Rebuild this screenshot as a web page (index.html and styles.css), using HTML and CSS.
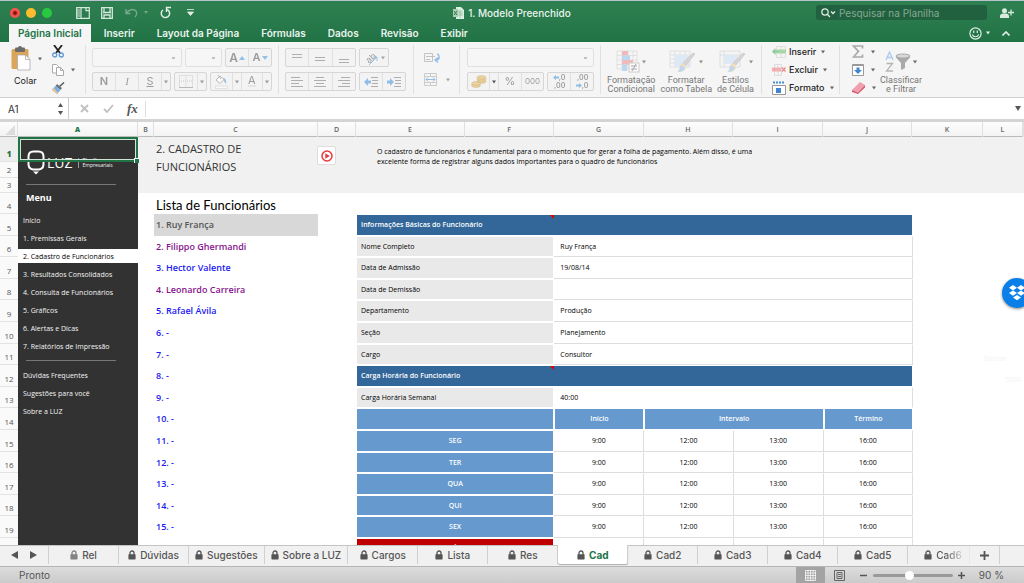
FILE: index.html
```html
<!DOCTYPE html>
<html lang="pt-BR">
<head>
<meta charset="utf-8">
<title>1. Modelo Preenchido</title>
<link rel="stylesheet" href="styles.css">
</head>
<body>
<svg class="defs" aria-hidden="true">
  <symbol id="caret" viewBox="0 0 5 4"><path d="M0 0h5L2.5 4z" fill="currentColor"/></symbol>
  <symbol id="lock" viewBox="0 0 8 10"><path d="M2 5V3a2 2 0 0 1 4 0v2" fill="none" stroke="currentColor" stroke-width="1.3"/><rect x="0.4" y="4.2" width="7.2" height="5.2" rx=".6" fill="currentColor"/></symbol>
  <symbol id="brush" viewBox="0 0 28 24"><path d="M26 4 17 15l-3-2L24 3z" fill="#c9c9c9" stroke="#aaa" stroke-width=".6"/><path d="M14 13l3 3c0 5-4 6-9 6 3-2 2-4 3-6 1-2 2-3 3-3z" fill="#f3d3a0"/><path d="M12 15l4 3c-1 3-4 4-7 4 2-2 1-5 3-7z" fill="#a9cdec"/></symbol>
</svg>
<div class="window">
  <header class="top">
    <div class="titlebar">
      <div class="quick">
        <span class="light red"></span><span class="light yellow"></span><span class="light green"></span>
        <button class="q-book" aria-label="Novo"><svg width="14" height="12" viewBox="0 0 14 12"><path d="M.7.7h12.6v10.6H.7zM5 .7v10.6M10 .7v3h3" fill="none" stroke="#d5e8dc" stroke-width="1.2"/><path d="M1 3h3M1 5h3M1 7h3M1 9h3" stroke="#d5e8dc"/></svg></button>
        <button class="q-save" aria-label="Salvar"><svg width="12" height="12" viewBox="0 0 12 12"><path d="M.7.7h10.6v10.6H.7z" fill="none" stroke="#d5e8dc" stroke-width="1.3"/><path d="M2 5.5h8M3 11V8h6v3M3 1v4M9 1v4" fill="none" stroke="#d5e8dc" stroke-width="1.3"/></svg></button>
        <button class="q-undo" aria-label="Desfazer"><svg width="13" height="10" viewBox="0 0 13 10"><path d="M1 1v4.500h4.500M1.500 5C4 2 7 1 9.500 2s3 4 .5 7" fill="none" stroke="#74a98a" stroke-width="1.400"/></svg></button>
        <svg class="q-uc" width="4" height="3"><use href="#caret"/></svg>
        <button class="q-redo" aria-label="Refazer"><svg width="11" height="13" viewBox="0 0 11 13"><path d="M7 3.500A4.200 4.200 0 1 1 3 4" fill="none" stroke="#e2efe7" stroke-width="1.500"/><path d="M6.500 6V1.500H11" fill="none" stroke="#e2efe7" stroke-width="1.400"/></svg></button>
        <button class="q-more" aria-label="Personalizar"><svg width="7" height="7" viewBox="0 0 7 7"><path d="M0 .5h7M.5 3h6L3.500 6.500z" fill="#e2efe7" stroke="#e2efe7" stroke-width=".8"/></svg></button>
      </div>
      <div class="doc"><svg width="11" height="12" viewBox="0 0 11 12"><path d="M3 0h5l3 3v9H3z" fill="#dcefe0"/><path d="M5 4h4M5 6h5M5 8h5M7 4v7" stroke="#83b893" stroke-width=".7"/><rect y="2" width="5" height="8" fill="#a9cdb3"/><path d="M1 4l3 4M4 4L1 8" stroke="#2b7b4c"/></svg>1. Modelo Preenchido</div>
      <div class="right">
        <label class="search"><svg width="15" height="10" viewBox="0 0 15 10"><circle cx="4" cy="4" r="3.200" fill="none" stroke="#e0eee5" stroke-width="1.200"/><path d="M6.300 6.300 9 9M10 3.500l2 2 2-2" fill="none" stroke="#e0eee5" stroke-width="1.300"/></svg><input type="text" placeholder="Pesquisar na Planilha" aria-label="Pesquisar na Planilha"></label>
        <button aria-label="Compartilhar"><svg width="14" height="10" viewBox="0 0 14 10"><circle cx="4.500" cy="2.700" r="2.500" fill="#d9eadf"/><path d="M0 10V8c0-2 2-2.500 4.500-2.500S9 6 9 8v2z" fill="#d9eadf"/><path d="M11 1.500v6M8 4.500h6" stroke="#d9eadf" stroke-width="1.300"/></svg></button>
      </div>
    </div>
    <nav class="tabs">
      <button class="tab on">Página Inicial</button><button class="tab">Inserir</button><button class="tab">Layout da Página</button><button class="tab">Fórmulas</button><button class="tab">Dados</button><button class="tab">Revisão</button><button class="tab">Exibir</button>
      <div class="feedback"><svg width="13" height="13" viewBox="0 0 13 13"><circle cx="6.500" cy="6.500" r="5.600" fill="none" stroke="#e0eee5" stroke-width="1.200"/><path d="M4.700 3.500v2.500M8.300 3.500v2.500M3.300 7.500c1 3 5.400 3 6.400 0" fill="none" stroke="#e0eee5" stroke-width="1.200"/></svg><svg width="4" height="4"><use href="#caret"/></svg><svg class="up" width="8" height="5" viewBox="0 0 8 5"><path d="M.5 4.500 4 1l3.500 3.500" fill="none" stroke="#e0eee5" stroke-width="1.600"/></svg></div>
    </nav>
  </header>

  <section class="ribbon">
    <div class="group g-clip">
      <button class="paste"><span class="ic"><svg width="20" height="25" viewBox="0 0 20 25"><rect x=".5" y="3" width="17" height="20" rx="1.500" fill="#dba65a"/><rect x="4" y="1.500" width="10" height="4.500" rx="1" fill="#6b6b6b"/><circle cx="9" cy="2" r="2" fill="#6b6b6b"/><path d="M6.500 9h8l4.500 4.500V24H6.500z" fill="#fff" stroke="#aaa" stroke-width=".8"/><path d="M14.500 9v4.500H19" fill="none" stroke="#aaa" stroke-width=".8"/></svg><svg width="4" height="4"><use href="#caret"/></svg></span><span>Colar</span></button>
      <div class="stack">
        <button aria-label="Recortar"><svg width="12" height="13" viewBox="0 0 12 13"><path d="M2 0l6 8M10 0L4 8" stroke="#222" stroke-width="1.800"/><circle cx="2.700" cy="10" r="2" fill="none" stroke="#5d98d6" stroke-width="1.300"/><circle cx="9.300" cy="10" r="2" fill="none" stroke="#5d98d6" stroke-width="1.300"/></svg></button>
        <button aria-label="Copiar"><svg width="12" height="12" viewBox="0 0 12 12"><path d="M.5.5h4l2 2V9h-6z" fill="#fff" stroke="#aaa"/><path d="M4.500 3.500h4l3 3v5h-7z" fill="#fff" stroke="#aaa"/><path d="M8.500 3.500v3h3" fill="none" stroke="#aaa"/></svg><svg width="4" height="4"><use href="#caret"/></svg></button>
        <button aria-label="Pincel"><svg width="13" height="12" viewBox="0 0 13 12"><path d="M12.500 1 8 5 7 4l4.500-4z" fill="#555"/><path d="M5 2l5 4-1.500 2-5-4z" fill="#6a7480"/><path d="M3.500 4 8.500 8 5 12 0 7.500z" fill="#79aee0"/><path d="M2 6l4 5-1 1-5-4z" fill="#e8c48e"/></svg></button>
      </div>
    </div>
    <div class="group g-font off">
      <div class="row">
        <select class="w-font" aria-label="Fonte"><option></option></select><select class="w-size" aria-label="Tamanho"><option></option></select>
        <div class="btns fs"><button aria-label="Aumentar"><b class="big">A</b><svg width="6" height="4" viewBox="0 0 6 4"><path d="M0 4h6L3 0z" fill="#4a97dc"/></svg></button><button aria-label="Diminuir"><b>A</b><svg width="6" height="4" viewBox="0 0 6 4"><path d="M0 0h6L3 4z" fill="#4a97dc"/></svg></button></div>
      </div>
      <div class="row">
        <div class="btns nis"><button><b>N</b></button><button><i>I</i></button><button><u>S</u></button><button class="mini" aria-label="Mais"><svg width="4" height="4"><use href="#caret"/></svg></button></div>
        <div class="btns bd"><button aria-label="Bordas"><svg width="14" height="13" viewBox="0 0 14 13"><path d="M.5.5h13v12H.5zM7 0v12M0 6h14" fill="none" stroke="#aaa" stroke-dasharray="1 1"/><path d="M0 12.500h14" stroke="#888"/></svg></button><button class="mini" aria-label="Mais"><svg width="4" height="4"><use href="#caret"/></svg></button></div>
        <div class="btns fc"><button aria-label="Preenchimento"><svg width="13" height="14" viewBox="0 0 13 14"><path d="M5 1 1 5l4 3.500 4-4z" fill="#fff" stroke="#888"/><path d="M3 0l3 4" stroke="#888"/><path d="M8 3c2.500 0 3.500 2 3 6C9.500 7 9 6 8 3z" fill="#4a97dc"/><path d="M.5 11h12v2.500H.5z" fill="#fff" stroke="#bbb" stroke-width=".6"/></svg></button><button class="mini" aria-label="Mais"><svg width="4" height="4"><use href="#caret"/></svg></button><button><span class="under">A</span></button><button class="mini" aria-label="Mais"><svg width="4" height="4"><use href="#caret"/></svg></button></div>
      </div>
    </div>
    <div class="group g-align off">
      <div class="row">
        <div class="btns three"><button aria-label="Superior"><svg width="10" height="10"><path d="M0 1.500h10M0 4.500h10" stroke="#777"/></svg></button><button aria-label="Meio"><svg width="10" height="10"><path d="M0 4.500h10M0 7.500h10" stroke="#777"/></svg></button><button aria-label="Inferior"><svg width="10" height="10"><path d="M0 6.500h10M0 9.500h10" stroke="#777"/></svg></button></div>
        <div class="btns one"><button aria-label="Orientação"><span class="turn"><span class="ab">ab</span><svg width="9" height="9" viewBox="0 0 9 9"><path d="M0 9 8 1M4 1h4v4" fill="none" stroke="#4a97dc"/></svg></span><svg width="4" height="4"><use href="#caret"/></svg></button></div>
      </div>
      <div class="row">
        <div class="btns three"><button aria-label="Esquerda"><svg width="12" height="10"><path d="M0 .5h9M0 3.500h12M0 6.500h8M0 9.500h12" stroke="#777"/></svg></button><button aria-label="Centro"><svg width="12" height="10"><path d="M2 .5h8M0 3.500h12M2 6.500h8M0 9.500h12" stroke="#777"/></svg></button><button aria-label="Direita"><svg width="12" height="10"><path d="M3 .5h9M0 3.500h12M4 6.500h8M0 9.500h12" stroke="#777"/></svg></button></div>
        <div class="btns two"><button aria-label="Diminuir recuo"><svg width="14" height="10"><path d="M7 .5h7M8 3.500h6M8 6.500h6M7 9.500h7" stroke="#777"/><path d="M0 5l4-4v2.500h3v3H4V9z" fill="#3f92dc"/></svg></button><button aria-label="Aumentar recuo"><svg width="14" height="10"><path d="M7 .5h7M8 3.500h6M8 6.500h6M7 9.500h7" stroke="#777"/><path d="M7 5 3 1v2.500H0v3h3V9z" fill="#3f92dc"/></svg></button></div>
      </div>
    </div>
    <div class="group g-wrap off">
      <button aria-label="Quebrar texto"><svg width="16" height="12" viewBox="0 0 16 12"><path d="M.5 1.500h8v8h-8zM2 4.500h9M2 7.500h4" fill="none" stroke="#999"/><path d="M13 2c3 1 3 6-1 6M14 5.500 11 8l3 2.500" fill="none" stroke="#3f92dc" stroke-width="1.400"/></svg></button>
      <button aria-label="Mesclar"><svg width="14" height="14" viewBox="0 0 14 14"><path d="M.5.5h12v12H.5zM.5 3.500h12M.5 9.500h12M6.500.5v3M6.500 9.500v3" fill="none" stroke="#aaa"/><path d="M2 6.500h9M4 4.500l-2 2 2 2M9 4.500l2 2-2 2" fill="none" stroke="#3f92dc"/></svg><svg width="4" height="4"><use href="#caret"/></svg></button>
    </div>
    <div class="group g-num off">
      <div class="row"><select class="w-num" aria-label="Formato de número"><option></option></select></div>
      <div class="row">
        <div class="btns num"><button aria-label="Moeda"><svg width="16" height="13" viewBox="0 0 16 13"><g fill="#e9bb55" stroke="#a9792a" stroke-width=".6"><ellipse cx="10.500" cy="6.500" rx="4.500" ry="1.800"/><ellipse cx="10.500" cy="4.500" rx="4.500" ry="1.800"/><ellipse cx="10.500" cy="2.500" rx="4.500" ry="1.800"/><ellipse cx="5" cy="10.500" rx="4.500" ry="1.800"/><ellipse cx="5" cy="8.500" rx="4.500" ry="1.800"/></g></svg></button><button class="mini dark" aria-label="Mais"><svg width="4" height="4"><use href="#caret"/></svg></button><button class="pct"><span>%</span></button><button class="zeros"><span>000</span></button></div>
        <div class="btns dec"><button aria-label="Aumentar casas decimais"><span><svg width="6" height="5" viewBox="0 0 6 5"><path d="M0 2.500 3 0v1.500h3v2H3V5z" fill="#3f92dc"/></svg>,0<br>,00</span></button><button aria-label="Diminuir casas decimais"><span>,00<br><svg width="6" height="5" viewBox="0 0 6 5"><path d="M6 2.500 3 0v1.500H0v2h3V5z" fill="#3f92dc"/></svg>,0</span></button></div>
      </div>
    </div>
    <div class="group g-style">
      <button class="large l1"><span class="ic"><svg width="24" height="24" viewBox="0 0 24 24"><path d="M1 1h20v18H1zM1 5.500h20M1 10h20M1 14.500h20M6 1v18M12 1v18M17 1v18" fill="none" stroke="#ccc" stroke-width=".7"/><path d="M6 1h6v4.500H6zM6 10h11v4.500H6z" fill="#f0a0a0"/><path d="M6 5.500h8V10H6zM6 14.500h5V21H6z" fill="#a5cbee"/><rect x="13" y="13" width="10" height="9" fill="#fff" stroke="#bbb"/><path d="M15 16h6M15 19h6M20 14l-4 7" stroke="#888"/></svg><svg width="4" height="4"><use href="#caret"/></svg></span><span>Formatação<br>Condicional</span></button>
      <button class="large l2"><span class="ic"><svg width="28" height="24" viewBox="0 0 28 24"><path d="M1 1h20v16H1zM1 5h20M1 9h20M1 13h20M6 1v16M11 1v16M16 1v16" fill="none" stroke="#ccc" stroke-width=".7"/><path d="M6 5h15v12H6z" fill="#d3e6f7"/><use href="#brush"/></svg><svg width="4" height="4"><use href="#caret"/></svg></span><span>Formatar<br>como Tabela</span></button>
      <button class="large l3"><span class="ic"><svg width="28" height="24" viewBox="0 0 28 24"><path d="M1 1h20v16H1zM1 5h20M5 1v16" fill="none" stroke="#ccc" stroke-width=".8"/><path d="M5 5h14v9H5z" fill="#d3e6f7"/><use href="#brush"/></svg><svg width="4" height="4"><use href="#caret"/></svg></span><span>Estilos<br>de Célula</span></button>
    </div>
    <div class="group g-cells">
      <button><svg width="14" height="12" viewBox="0 0 14 12"><path d="M4.500.5h9v11h-9zM9 0v12" fill="none" stroke="#ddd"/><path d="M5 3.500h9v4H5z" fill="#a7d7a9"/><path d="M0 5.500 3.500 2v2.500H6v2H3.500V9z" fill="#8fcb93"/></svg>Inserir<svg width="4" height="4"><use href="#caret"/></svg></button>
      <button><svg width="14" height="12" viewBox="0 0 14 12"><path d="M2.500.5h7v11h-7zM6 0v12" fill="none" stroke="#ddd"/><path d="M0 3.500h9v4H0z" fill="#f2aeb0"/><path d="M10 3.500l3.500 4M13.500 3.500l-3.500 4" stroke="#e9888c" stroke-width="1.200"/></svg>Excluir<svg width="4" height="4"><use href="#caret"/></svg></button>
      <button><svg width="14" height="14" viewBox="0 0 14 14"><path d="M1 1.500h11" stroke="#4b8fd6" stroke-width="2" stroke-dasharray="2 1"/><path d="M.5 4.500h13v9H.5z" fill="#fff" stroke="#999"/><path d="M4 7h5v5H4z" fill="#3f86d2"/></svg>Formato<svg width="4" height="4"><use href="#caret"/></svg></button>
    </div>
    <div class="group g-edit">
      <div class="stack">
        <button aria-label="Soma"><svg width="12" height="13" viewBox="0 0 12 13"><path d="M10.500 3.500V1H1.500l5 5.300-5 5.700h9V9.500" fill="none" stroke="#aaa" stroke-width="1.700"/></svg><svg width="4" height="4"><use href="#caret"/></svg></button>
        <button aria-label="Preencher"><svg width="12" height="12" viewBox="0 0 12 12"><path d="M.5.5h11v11H.5z" fill="#fff" stroke="#999"/><path d="M0 1.500h12" stroke="#999"/><path d="M4.500 3.500h3V6H10l-4 4-4-4h2.500z" fill="#3f86d2"/></svg><svg width="4" height="4"><use href="#caret"/></svg></button>
        <button aria-label="Limpar"><svg width="13" height="12" viewBox="0 0 13 12"><path d="M8 0l5 3-7 7.500L0 8z" fill="#ef9fae"/><path d="M0 8l6 2.500L13 3v2.500L6 12 0 10z" fill="#d9566f"/></svg><svg width="4" height="4"><use href="#caret"/></svg></button>
      </div>
      <button class="large l4"><span class="ic"><svg width="26" height="22" viewBox="0 0 26 22"><path d="M1 9 4.500 1 8 9M2.300 6.500h4.500" fill="none" stroke="#a9cbea" stroke-width="1.300"/><path d="M1.500 12.500h6l-6 7.500h6.500" fill="none" stroke="#b5b5b5" stroke-width="1.300"/><path d="M11 5v1.500l5 5.500v7l4-2v-5l5-5.500V5z" fill="#a9a9a9"/><ellipse cx="18" cy="5" rx="7" ry="2" fill="#d8d8d8" stroke="#a9a9a9"/></svg><svg width="4" height="4"><use href="#caret"/></svg></span><span>Classificar<br>e Filtrar</span></button>
    </div>
  </section>

  <section class="formula">
    <label class="namebox"><input type="text" value="A1" aria-label="Caixa de nome"><svg width="7" height="14" viewBox="0 0 7 14"><path d="M1 5h5L3.500 1zM1 9h5l-2.500 4z" fill="#555"/></svg></label>
    <button class="fx-x" aria-label="Cancelar"><svg width="9" height="9"><path d="M1 1l7 7M8 1 1 8" stroke="#c0c0c0" stroke-width="1.800"/></svg></button>
    <button class="fx-ok" aria-label="Inserir"><svg width="11" height="9"><path d="M1 5l3 3 6-7" fill="none" stroke="#c0c0c0" stroke-width="1.800"/></svg></button>
    <button class="fx">fx</button>
    <input class="fx-in" type="text" aria-label="Fórmula">
    <svg width="6" height="5"><use href="#caret"/></svg>
  </section>

  <div class="colheads"><span class="corner"><svg width="10" height="10"><path d="M10 0v10H0z" fill="#dcdcdc"/></svg></span><span class="sel">A</span><span>B</span><span>C</span><span>D</span><span>E</span><span>F</span><span>G</span><span>H</span><span>I</span><span>J</span><span>K</span><span>L</span><span></span></div>

  <main class="sheet">
    <div class="rowheads">
      <div class="h1 sel">1</div><div class="h2">2</div><div class="h3">3</div><div class="h4">4</div>
      <div class="rows"><div>5</div><div>6</div><div>7</div><div>8</div><div>9</div><div>10</div><div>11</div><div>12</div><div>13</div><div>14</div><div>15</div><div>16</div><div>17</div><div>18</div><div>19</div></div>
    </div>
    <aside class="side">
      <div class="logo"><svg width="18" height="25" viewBox="0 0 18 25"><path d="M6 19.500C2.500 19 1.500 17 1.500 14V6.500c0-3 2-5 5-5h5c3 0 5 2 5 5V14c0 3-1 5-4.500 5.500z" fill="none" stroke="#fff" stroke-width="2"/><path d="M6 21.500h6L9 24.500z" fill="#fff"/></svg><b>LUZ</b><small>Planilhas<br>Empresariais</small></div>
      <hr>
      <h2>Menu</h2>
      <nav><a href="#">Início</a><a href="#">1. Premissas Gerais</a><a class="on" href="#">2. Cadastro de Funcionários</a><a href="#">3. Resultados Consolidados</a><a href="#">4. Consulta de Funcionários</a><a href="#">5. Gráficos</a><a href="#">6. Alertas e Dicas</a><a href="#">7. Relatórios de Impressão</a></nav>
      <hr>
      <nav><a href="#">Dúvidas Frequentes</a><a href="#">Sugestões para você</a><a href="#">Sobre a LUZ</a></nav>
      <div class="cursor"></div>
    </aside>
    <div class="content">
      <div class="band">
        <h1>2. CADASTRO DE FUNCIONÁRIOS</h1>
        <button class="play" aria-label="Vídeo"><svg width="12" height="12" viewBox="0 0 12 12"><circle cx="6" cy="6" r="5" fill="#fff" stroke="#e8383d" stroke-width="1.500"/><path d="M4.300 3.300 8.800 6 4.300 8.700z" fill="#e8383d"/></svg></button>
        <p>O cadastro de funcionários é fundamental para o momento que for gerar a folha de pagamento. Além disso, é uma excelente forma de registrar alguns dados importantes para o quadro de funcionários</p>
      </div>
      <h3>Lista de Funcionários</h3>
      <div class="data">
        <div class="list rows"><a class="cur" href="#">1. Ruy França</a><a class="seen" href="#">2. Filippo Ghermandi</a><a href="#">3. Hector Valente</a><a class="seen" href="#">4. Leonardo Carreira</a><a href="#">5. Rafael Ávila</a><a href="#">6. -</a><a href="#">7. -</a><a href="#">8. -</a><a href="#">9. -</a><a href="#">10. -</a><a href="#">11. -</a><a href="#">12. -</a><a href="#">13. -</a><a href="#">14. -</a><a href="#">15. -</a></div>
        <table>
          <colgroup><col class="c1"><col class="c2"><col class="c3"><col class="c2"><col class="c3"></colgroup>
          <tbody class="rows">
          <tr><th class="bar" colspan="5">Informações Básicas do Funcionário</th></tr>
          <tr><th class="lab">Nome Completo</th><td class="val" colspan="4">Ruy França</td></tr>
          <tr><th class="lab">Data de Admissão</th><td class="val" colspan="4">19/08/14</td></tr>
          <tr><th class="lab">Data de Demissão</th><td class="val" colspan="4"></td></tr>
          <tr><th class="lab">Departamento</th><td class="val" colspan="4">Produção</td></tr>
          <tr><th class="lab">Seção</th><td class="val" colspan="4">Planejamento</td></tr>
          <tr><th class="lab">Cargo</th><td class="val" colspan="4">Consultor</td></tr>
          <tr><th class="bar" colspan="5">Carga Horária do Funcionário</th></tr>
          <tr><th class="lab">Carga Horária Semanal</th><td class="val last" colspan="4">40:00</td></tr>
          <tr><th class="blue"></th><th class="blue">Início</th><th class="blue" colspan="2">Intervalo</th><th class="blue">Término</th></tr>
          <tr><th class="blue">SEG</th><td>9:00</td><td>12:00</td><td>13:00</td><td>16:00</td></tr>
          <tr><th class="blue">TER</th><td>9:00</td><td>12:00</td><td>13:00</td><td>16:00</td></tr>
          <tr><th class="blue">QUA</th><td>9:00</td><td>12:00</td><td>13:00</td><td>16:00</td></tr>
          <tr><th class="blue">QUI</th><td>9:00</td><td>12:00</td><td>13:00</td><td>16:00</td></tr>
          <tr><th class="blue">SEX</th><td>9:00</td><td>12:00</td><td>13:00</td><td>16:00</td></tr>
          <tr><th class="blue sat">SÁB</th><td></td><td></td><td></td><td></td></tr>
          </tbody>
        </table>
        <div class="aux"><span>Diretor</span><span>5000</span></div>
      </div>
    </div>
    <div class="dropbox"><svg width="18" height="16" viewBox="0 0 18 16"><path d="M5 0 9 2.700 5 5.400 1 2.700zM13 0l4 2.700-4 2.700-4-2.700zM5 5.400l4 2.700-4 2.700-4-2.700zM13 5.400l4 2.700-4 2.700-4-2.700zM9 10l4 2.500L9 15.200l-4-2.700z" fill="#fff"/></svg></div>
  </main>

  <footer>
    <div class="sheets">
      <div class="arrows"><button aria-label="Anterior"><svg width="7" height="8"><path d="M7 0v8L0 4z" fill="#555"/></svg></button><button aria-label="Próxima"><svg width="7" height="8"><path d="M0 0v8l7-4z" fill="#555"/></svg></button></div>
      <button class="st first"><svg width="8" height="10"><use href="#lock"/></svg>Rel</button><button class="st"><svg width="8" height="10"><use href="#lock"/></svg>Dúvidas</button><button class="st"><svg width="8" height="10"><use href="#lock"/></svg>Sugestões</button><button class="st"><svg width="8" height="10"><use href="#lock"/></svg>Sobre a LUZ</button><button class="st"><svg width="8" height="10"><use href="#lock"/></svg>Cargos</button><button class="st"><svg width="8" height="10"><use href="#lock"/></svg>Lista</button><button class="st"><svg width="8" height="10"><use href="#lock"/></svg>Res</button><button class="st on"><svg width="8" height="10"><use href="#lock"/></svg>Cad</button><button class="st"><svg width="8" height="10"><use href="#lock"/></svg>Cad2</button><button class="st"><svg width="8" height="10"><use href="#lock"/></svg>Cad3</button><button class="st"><svg width="8" height="10"><use href="#lock"/></svg>Cad4</button><button class="st"><svg width="8" height="10"><use href="#lock"/></svg>Cad5</button><button class="st cut"><svg width="8" height="10"><use href="#lock"/></svg>Cad6</button>
      <button class="add" aria-label="Nova planilha"><svg width="9" height="9"><path d="M4.500 0v9M0 4.500h9" stroke="#555" stroke-width="1.800"/></svg></button>
    </div>
    <div class="status">
      <span class="ready">Pronto</span>
      <button class="view on" aria-label="Normal"><svg width="11" height="11" viewBox="0 0 11 11"><path d="M.5.5h10v10H.5zM3 0v11M5.500 0v11M8 0v11M0 3h11M0 5.500h11M0 8h11" fill="none" stroke="#fff" stroke-width=".7"/></svg></button>
      <button class="view" aria-label="Layout da página"><svg width="11" height="11" viewBox="0 0 11 11"><path d="M.5.5h10v10H.5zM3 2.500h5v6H3zM4 4.500h3M4 6.500h3" fill="none" stroke="#666"/></svg></button>
      <svg class="minus" width="7" height="7"><path d="M0 3.500h7" stroke="#555" stroke-width="1.500"/></svg>
      <input type="range" min="0" max="100" value="45" aria-label="Zoom">
      <svg width="7" height="7"><path d="M0 3.500h7M3.500 0v7" stroke="#555" stroke-width="1.500"/></svg>
      <span class="pc">90 %</span>
    </div>
  </footer>
</div>
</body>
</html>
```

FILE: styles.css
```css
* { box-sizing: border-box; }
body { margin: 0; font: 10px/12px Inter, "Liberation Sans", sans-serif; color: #333; }
button { border: 0; padding: 0; margin: 0; background: none; font: inherit; color: inherit; display: flex; align-items: center; justify-content: center; white-space: nowrap; }
input { border: 0; padding: 0; margin: 0; background: none; font: inherit; color: inherit; min-width: 0; }
h1, h2, h3, p { margin: 0; font-weight: 400; }
a { color: inherit; text-decoration: none; }
svg { flex: none; }
.defs { display: none; }
.window { height: 100vh; display: flex; flex-direction: column; overflow: hidden; background: #fff; }

/* Title bar and ribbon tabs */
.top { flex: none; border-top: 1px solid #b9c3cc; background: linear-gradient(#2f8051, #217346); color: #e9f3ed; }
.titlebar { height: 23px; display: grid; grid-template-columns: 1fr auto 1fr; align-items: center; }
.quick { display: flex; align-items: center; padding-left: 10px; }
.light { width: 10px; height: 10px; border-radius: 50%; margin-right: 6px; flex: none; }
.red { background: radial-gradient(circle, #7a0f0c 0 1px, #f9544d 3px); }
.yellow { background: #fdbc2e; }
.green { background: #28c840; }
.q-book { margin-left: 18px; }
.q-save { margin-left: 11px; }
.q-undo { margin-left: 12px; }
.q-uc { margin-left: 6px; color: #74a98a; }
.q-redo { margin-left: 12px; }
.q-more { margin-left: 16px; }
.doc { display: flex; align-items: center; gap: 4px; font-weight: 500; }
.right { display: flex; align-items: center; justify-content: flex-end; gap: 13px; padding-right: 10px; }
.search { width: 171px; height: 15px; border-radius: 3px; background: #226140; display: flex; align-items: center; padding-left: 5px; gap: 3px; }
.search input { flex: 1; }
.search input::placeholder { color: #82aa93; opacity: 1; }
.tabs { height: 18px; display: flex; padding-left: 9px; }
.tab { padding: 0 11px; font-weight: 600; }
.tab.on { background: #f5f5f5; color: #217346; padding: 0 9px; margin-right: 2px; }
.feedback { margin-left: auto; display: flex; align-items: center; gap: 4px; padding-right: 14px; }
.up { margin-left: 8px; }

/* Ribbon */
.ribbon { flex: none; height: 56px; display: flex; background: #f5f5f5; border-bottom: 1px solid #d0d0d0; padding: 3px 0; font-size: 9px; line-height: 9px; color: #222; }
.group { height: 49px; border-right: 1px solid #e0e0e0; display: flex; flex: none; }
.group svg:last-child:not(:first-child) { color: #666; }
.g-clip { width: 86px; padding-left: 11px; gap: 10px; }
.paste { flex-direction: column; gap: 5px; justify-content: flex-start; padding-top: 1px; align-items: flex-start; }
.paste > span:last-child { padding-left: 3px; }
.ic { display: flex; align-items: center; gap: 7px; }
.stack { display: flex; flex-direction: column; justify-content: space-between; align-items: flex-start; }
.stack button { gap: 7px; height: 13px; }
.g-font, .g-align, .g-num { flex-direction: column; gap: 4px; padding: 3px 0 0 6px; }
.g-font { width: 193px; }
.g-align { width: 135px; }
.g-num { width: 141px; padding-left: 7px; }
.row { display: flex; gap: 3px; height: 20px; }
.off { color: #555; }
.off button > *, .off select { opacity: .55; }
.off select { appearance: none; border: 1px solid #cfcfcf; border-radius: 2px; height: 19px; background: #f8f8f8 linear-gradient(45deg, #999, #999) no-repeat right 6px center / 3px 2px; }
.w-font { width: 90px; } .w-size { width: 37px; } .w-num { width: 127px; }
.btns { display: flex; height: 19px; border: 1px solid #d6d6d6; border-radius: 2px; background: #f3f3f3; }
.btns button { flex: 1; border-left: 1px solid #e0e0e0; font-size: 11px; gap: 1px; min-width: 0; }
.btns button:first-child { border-left: 0; }
.btns .mini { flex: none; width: 9px; }
.btns b { font-weight: 600; }
.btns .big { font-size: 12px; }
.btns i { font-family: "Liberation Serif", serif; }
.fs { width: 47px; } .nis { width: 79px; } .bd { width: 33px; } .fc { width: 62px; }
.under { border-bottom: 2px solid #ddd; }
.three { width: 71px; } .one { width: 30px; } .two { width: 47px; }
.btns.one button { gap: 3px; }
.turn { display: grid; }
.turn > * { grid-area: 1 / 1; }
.turn svg { align-self: end; justify-self: end; }
.ab { font-size: 9px; line-height: 14px; width: 14px; transform: rotate(-42deg); }
.num { width: 77px; } .dec { width: 47px; }
.num .zeros { font-size: 8px; }
.num .pct { flex: none; width: 23px; }
.dec button { font-size: 7px; line-height: 8px; text-align: right; font-weight: 600; }
.num .dark > * { opacity: 1; }
.g-wrap { width: 46px; flex-direction: column; padding: 7px 0 0 10px; gap: 9px; align-items: flex-start; }
.g-wrap button { gap: 8px; }
.g-style { width: 161px; justify-content: space-between; padding: 0 7px 0 6px; }
.large { flex-direction: column; justify-content: flex-start; gap: 2px; padding-top: 4px; color: #777; font-family: Roboto, sans-serif; }
.large .ic { gap: 2px; height: 25px; }
.g-style svg { opacity: .7; }
.g-cells { width: 78px; flex-direction: column; padding-left: 10px; justify-content: space-between; align-items: flex-start; }
.g-cells button { gap: 3px; height: 13px; font-weight: 500; }
.g-cells svg:last-child { margin-left: 2px; }
.g-edit { border: 0; padding-left: 12px; gap: 4px; }

/* Formula bar */
.formula { flex: none; height: 24px; display: flex; align-items: center; background: #fff; border-bottom: 3px solid #d4d4d4; color: #555; padding-right: 3px; }
.namebox { width: 69px; height: 100%; border-right: 1px solid #ccc; display: flex; align-items: center; padding: 0 4px 0 8px; color: #333; }
.namebox input { flex: 1; }
.fx-x { margin-left: 11px; } .fx-ok { margin-left: 14px; }
.formula .fx { margin-left: 13px; font: italic 700 13px/16px "Liberation Serif", serif; padding-right: 7px; border-right: 1px solid #ddd; }
.fx-in { flex: 1; height: 100%; }

/* Column and row headings */
.colheads { flex: none; height: 15px; display: grid; grid-template-columns: 18px 120px 16px 164px 38px 109px 89px 90px 89px 90px 89px 71px 40px 1fr; background: linear-gradient(#fdfdfd, #f3f3f3); border-bottom: 1px solid #bbb; font: 600 7px/15px "Open Sans", sans-serif; text-align: center; color: #666; }
.colheads span { border-right: 1px solid #e0e0e0; }
.colheads .corner { display: flex; align-items: center; justify-content: flex-end; padding-right: 2px; }
.colheads .sel, .rowheads .sel { color: #217346; font-weight: 800; }
.sheet { flex: 1; min-height: 0; display: flex; overflow: hidden; position: relative; font-family: "Open Sans", "Liberation Sans", sans-serif; }
.rowheads { width: 18px; flex: none; font-size: 8px; line-height: 10px; text-align: center; font-weight: 400; color: #555; background: #fafafa; }
.rowheads div:not(.rows) { display: flex; align-items: flex-end; justify-content: center; padding-bottom: 2px; border-bottom: 1px solid #e3e3e3; }
.rowheads .h1 { height: 25px; background: #eee; }
.h2 { height: 16px; } .h3 { height: 15px; } .h4 { height: 21px; }
.rows > * { height: 22px; }
.rows > :nth-child(5n+2), .rows > :nth-child(5n+4) { height: 21px; }

/* Dark navigation */
.side { width: 120px; flex: none; background: #323232; color: #f4f4f4; position: relative; font-size: 7px; line-height: 13px; }
.logo { display: flex; align-items: center; padding: 13px 0 0 9px; height: 38px; gap: 2px; }
.logo b { font: 400 14px/16px "Open Sans", sans-serif; color: #fff; }
.logo small { font-size: 5px; line-height: 5px; border-left: 1px solid #999; padding-left: 4px; margin-left: 3px; }
.side hr { border: 0; border-top: 1px solid #777; margin: 9px 22px 0 8px; }
.side h2 { font-size: 9px; line-height: 14px; font-weight: 700; color: #fff; padding: 6px 8px 0; }
.side nav { display: flex; flex-direction: column; gap: 4px; padding-top: 8px; }
.side nav a { padding: 1px 0 0 5px; white-space: nowrap; }
.side nav .on { background: #fff; color: #000; font-weight: 500; }
.side nav + hr { margin-top: 7px; }
.side hr + nav { padding-top: 7px; }
.cursor { position: absolute; left: 0; top: 0; width: 120px; height: 25px; border: 2px solid #217346; outline: 1px solid #cfe3d7; outline-offset: -3px; }
.cursor::after { content: ""; position: absolute; right: -3px; bottom: -3px; width: 4px; height: 4px; background: #217346; box-sizing: content-box; border: 0 solid #fff; border-width: 1px 0 0 1px; }

/* Sheet content */
.content { flex: 1; min-width: 0; }
.band { height: 56px; background: #f1f1f1; display: flex; align-items: flex-start; padding-left: 18px; }
.band h1 { width: 161px; flex: none; font-size: 11px; line-height: 18px; padding: 3px 50px 0 0; color: #333; }
.play { width: 19px; height: 19px; background: #fff; border: 1px solid #ddd; border-radius: 2px; margin-top: 9px; flex: none; }
.band p { margin: 10px 0 0 41px; width: 390px; font-size: 7px; line-height: 10px; color: #000; }
.content h3 { height: 21px; padding-left: 18px; font: 400 13px/24px "Noto Sans", sans-serif; font-family: Lato, sans-serif; color: #000; }
.data { display: flex; padding-left: 16px; }
.list { width: 164px; flex: none; font-size: 9px; line-height: 22px; color: #1a1af2; font-weight: 600; }
.list a { display: block; padding-left: 2px; }
.list .cur { background: #d8d8d8; color: #555; }
.list .seen { color: #86138c; }
table { width: 557px; flex: none; margin-left: 38px; table-layout: fixed; border-collapse: separate; border-spacing: 0; font-size: 7px; line-height: 10px; color: #000; }
.c1 { width: 198px; } .c2 { width: 90px; } .c3 { width: 89px; }
td, th { padding: 0; text-align: center; font-weight: 500; border-right: 1px solid #ddd; border-bottom: 1px solid #ddd; }
td { border-top: 1px solid #fff; }
th { border: 1px solid #fff; color: #fff; position: relative; background-clip: padding-box; }
.bar, .lab { text-align: left; padding-left: 4px; }
.bar { background-color: #336799; font-weight: 600; }
.bar::after { content: ""; position: absolute; left: 193px; top: 0; border: 2px solid #e00000; border-left-color: transparent; border-bottom-color: transparent; }
.lab { background-color: #e9e9e9; color: #000; }
.val { text-align: left; padding-left: 6px; }
.last { border-bottom-color: #fff; }
.blue { background-color: #6699cd; font-weight: 600; }
.sat { background-color: #c00000; }
.aux { flex: 1; min-width: 0; padding-top: 140px; font-size: 7px; line-height: 10px; color: #f3f3f3; display: flex; flex-direction: column; gap: 11px; align-items: flex-end; padding-right: 3px; }
.aux span:first-child { padding-right: 14px; }
.dropbox { position: absolute; right: -8px; top: 141px; width: 30px; height: 30px; border-radius: 50%; background: #0a7fe8; box-shadow: 0 1px 3px #888; display: flex; align-items: center; justify-content: center; }

/* Sheet tabs and status bar */
footer { flex: none; font-size: 10px; }
.sheets { height: 22px; display: flex; background: #f1f1f1; border-top: 1px solid #c4c4c4; border-bottom: 1px solid #b4b4b4; color: #555; padding-bottom: 2px; }
.arrows { display: flex; gap: 12px; width: 49px; flex: none; padding-left: 11px; border-right: 1px solid #d0d0d0; }
.st { min-width: 70px; padding: 0 6px; gap: 4px; border-right: 1px solid #d0d0d0; flex: none; font-weight: 500; }
.st.on { background: #fff; color: #217346; font-weight: 700; margin-top: -1px; box-shadow: 0 1px 1px #aaa; border-radius: 0 0 2px 2px; }
.st svg { color: #555; }
.first svg { opacity: .7; }
.st.cut { min-width: 0; flex: 0 1 62px; overflow: hidden; justify-content: flex-start; padding-left: 16px; mask-image: linear-gradient(90deg, #000 60%, #0004 85%); }
.add { width: 30px; border-right: 1px solid #d0d0d0; }
.status { height: 16px; display: flex; align-items: center; background: linear-gradient(#dcdcdc, #cbcbcb); color: #555; padding-right: 20px; }
.ready { padding-left: 19px; flex: 1; }
.view { width: 29px; height: 16px; }
.view.on { background: #a3a3a3; }
.minus { margin-left: 6px; }
.status input { appearance: none; width: 80px; height: 9px; margin: 0 5px 0 6px; }
.status input::-webkit-slider-runnable-track { height: 3px; background: #999; border-radius: 2px; }
.status input::-webkit-slider-thumb { appearance: none; width: 9px; height: 9px; margin-top: -3px; border-radius: 50%; background: #fff; }
.pc { margin-left: 14px; }
```
